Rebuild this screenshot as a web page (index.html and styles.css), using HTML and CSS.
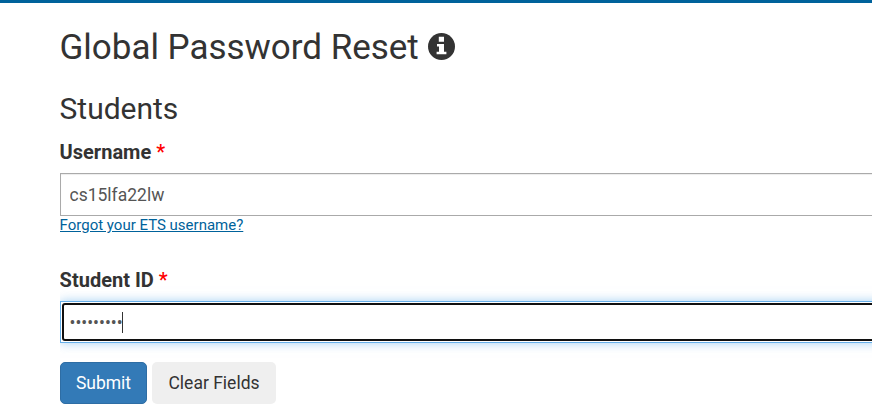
FILE: index.html
```html
<!DOCTYPE html>
<html lang="en">
<head>
<meta charset="utf-8">
<title>Global Password Reset</title>
<link rel="stylesheet" href="styles.css">
</head>
<body>
<main class="page">
  <h1 class="title">Global Password Reset
    <svg class="info" viewBox="0 0 27 27" aria-hidden="true"><circle cx="13.5" cy="13.5" r="13.5"/><path class="info-mark" d="M10.8 3.8h5.2v5h-5.2zM9 11h7v7.7h2.4v2.5H8.6v-2.5H11v-5.2H9z"/></svg>
  </h1>
  <form class="form">
    <h2 class="section">Students</h2>
    <label class="label" for="user">Username <span class="req">*</span></label>
    <input class="field" id="user" type="text" value="cs15lfa22lw">
    <a class="forgot" href="#">Forgot your ETS username?</a>
    <label class="label label-id" for="sid">Student ID <span class="req">*</span></label>
    <div class="field field-active" id="sid"><span class="focus-ring"><span class="dots">•••••••••</span><span class="caret"></span></span></div>
    <div class="actions">
      <button class="btn btn-primary" type="button">Submit</button>
      <button class="btn" type="button">Clear Fields</button>
    </div>
  </form>
</main>
</body>
</html>
```
FILE: styles.css
```css
* { box-sizing: border-box; }
body {
  margin: 0;
  border-top: 3px solid #00629b;
  background: #fff;
  color: #333;
  font-family: Roboto, "Liberation Sans", sans-serif;
  overflow: hidden;
}
.page { padding-top: 25px; margin-left: 60px; overflow: hidden; height: 413px; }
.title {
  display: flex;
  align-items: center;
  gap: 9.6px;
  margin: 0;
  font-size: 35px;
  font-weight: 400;
  line-height: 40px;
  letter-spacing: -.02px;
  text-indent: -.5px;
  white-space: nowrap;
}
.info { width: 27px; height: 27px; fill: #333; margin-top: -4px; }
.info-mark { fill: #fff; }
.form { display: flex; flex-direction: column; align-items: flex-start; }
.section { margin: 24px 0 0; font-size: 30px; font-weight: 400; line-height: 34px; text-indent: -.5px; }
.label { margin-top: 13px; font-size: 20px; font-weight: 700; line-height: 26px; text-indent: -.4px; }
.req { color: #f00; font-weight: 500; }
.field {
  width: 900px;
  height: 43px;
  margin: 8px 0 0;
  padding: 0 8.5px;
  border: 1px solid #aaa;
  color: #555;
  background: #fff;
  box-shadow: inset 0 1px 1px rgba(0, 0, 0, .075);
  font: 400 17.5px/26px Roboto, "Liberation Sans", sans-serif;
}
.forgot { color: #00629b; font-size: 15px; line-height: 18px; text-indent: -.4px; }
.label-id { margin-top: 33px; }
.field-active {
  height: 42px;
  padding: 1px;
  border-color: #66afe9;
  box-shadow: 0 0 10px rgba(102, 175, 233, .6);
}
.focus-ring {
  display: flex;
  align-items: center;
  height: 38px;
  padding-left: 5.5px;
  border: 2px solid #101010;
  border-radius: 3px;
}
.dots { padding-top: 1px; }
.caret { width: 1px; height: 21px; margin-left: -1px; background: #333; }
.actions { display: flex; gap: 5px; margin-top: 19px; }
.btn {
  width: 124px;
  height: 42px;
  padding: 0;
  border: 0;
  border-radius: 5px;
  background: #efefef;
  color: #333;
  font: 400 17.5px/26px Roboto, "Liberation Sans", sans-serif;
}
.btn-primary { width: 87px; border: 1px solid #2e6da4; background: #337ab7; color: #fff; }
```
